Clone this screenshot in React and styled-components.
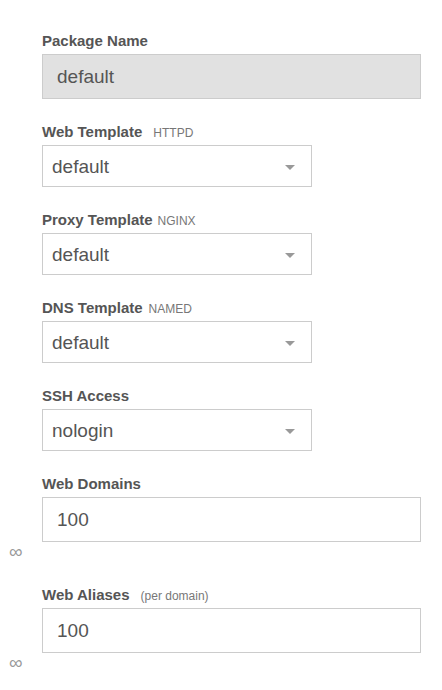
import styled, { createGlobalStyle } from "styled-components";

const GlobalStyle = createGlobalStyle`
  body {
    margin: 0;
    background: #fff;
    font-family: "Liberation Sans", Arial, sans-serif;
  }
`;

const Form = styled.div`
  padding: 31px 0 0 42px;
`;

const Field = styled.div`
  margin-bottom: 23px;
`;

const Label = styled.label`
  display: block;
  font-size: 15px;
  font-weight: bold;
  line-height: 20px;
  color: #555;
  margin-bottom: 3px;
`;

const Hint = styled.span`
  font-size: 12px;
  font-weight: normal;
  line-height: 1;
  color: #777;
  margin-left: ${(p) => p.$gap}px;
`;

const TextInput = styled.input`
  display: block;
  box-sizing: border-box;
  width: 379px;
  height: 45px;
  padding: 1px 14px 0;
  border: 1px solid #ccc;
  background: ${(p) => (p.$muted ? "#e1e1e1" : "#fff")};
  font-family: inherit;
  font-size: 19px;
  color: #555;
  outline: none;
`;

const SelectBox = styled.div`
  box-sizing: border-box;
  width: 270px;
  height: 42px;
  padding: 2px 16px 0 9px;
  border: 1px solid #ccc;
  display: flex;
  align-items: center;
  justify-content: space-between;
  font-size: 19px;
  color: #555;
  cursor: pointer;
`;

const Unlimited = styled.div`
  margin-left: -33px;
  font-size: 19px;
  line-height: 20px;
  color: #999;
`;

const Caret = () => (
  <svg width="10" height="5" viewBox="0 0 10 5">
    <path d="M0 0h10L5 5z" fill="#999" />
  </svg>
);

const selects = [
  { label: "Web Template", hint: "HTTPD", gap: 11, value: "default" },
  { label: "Proxy Template", hint: "NGINX", gap: 5, value: "default" },
  { label: "DNS Template", hint: "NAMED", gap: 6, value: "default" },
  { label: "SSH Access", value: "nologin" },
];

const limits = [
  { label: "Web Domains", value: "100" },
  { label: "Web Aliases", hint: "(per domain)", gap: 11, value: "100" },
];

export default function App() {
  return (
    <>
      <GlobalStyle />
      <Form>
        <Field>
          <Label>Package Name</Label>
          <TextInput $muted readOnly value="default" />
        </Field>
        {selects.map((s) => (
          <Field key={s.label}>
            <Label>
              {s.label}
              {s.hint && <Hint $gap={s.gap}>{s.hint}</Hint>}
            </Label>
            <SelectBox>
              <span>{s.value}</span>
              <Caret />
            </SelectBox>
          </Field>
        ))}
        {limits.map((l) => (
          <Field key={l.label}>
            <Label>
              {l.label}
              {l.hint && <Hint $gap={l.gap}>{l.hint}</Hint>}
            </Label>
            <TextInput defaultValue={l.value} />
            <Unlimited>∞</Unlimited>
          </Field>
        ))}
      </Form>
    </>
  );
}
